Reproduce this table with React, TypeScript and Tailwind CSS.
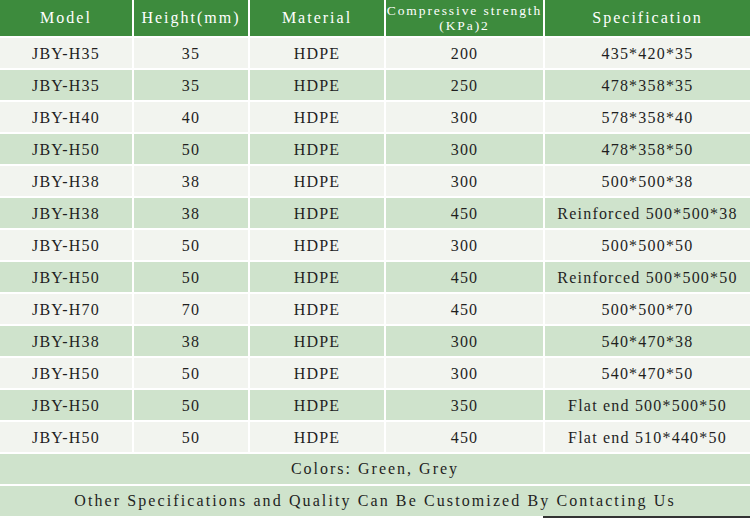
const HEADERS = ["Model", "Height(mm)", "Material", "Compressive strength (KPa)2", "Specification"];

const ROWS: [string, string, string, string, string][] = [
  ["JBY-H35", "35", "HDPE", "200", "435*420*35"],
  ["JBY-H35", "35", "HDPE", "250", "478*358*35"],
  ["JBY-H40", "40", "HDPE", "300", "578*358*40"],
  ["JBY-H50", "50", "HDPE", "300", "478*358*50"],
  ["JBY-H38", "38", "HDPE", "300", "500*500*38"],
  ["JBY-H38", "38", "HDPE", "450", "Reinforced 500*500*38"],
  ["JBY-H50", "50", "HDPE", "300", "500*500*50"],
  ["JBY-H50", "50", "HDPE", "450", "Reinforced 500*500*50"],
  ["JBY-H70", "70", "HDPE", "450", "500*500*70"],
  ["JBY-H38", "38", "HDPE", "300", "540*470*38"],
  ["JBY-H50", "50", "HDPE", "300", "540*470*50"],
  ["JBY-H50", "50", "HDPE", "350", "Flat end 500*500*50"],
  ["JBY-H50", "50", "HDPE", "450", "Flat end 510*440*50"],
];

const COLS = "grid grid-cols-[132px_114px_134px_157px_205px] gap-x-[2px]";

export default function App() {
  return (
    <div className="w-[750px] h-[520px] bg-white flex flex-col gap-y-[2px] font-['Liberation_Serif',serif] text-[#1f1f1f]">
      {/* Header */}
      <div className={`${COLS} h-[36px]`}>
        {HEADERS.map((h, i) => (
          <div
            key={h}
            className={`bg-[#3d8b3d] text-white flex items-center justify-center text-center whitespace-nowrap ${
              i === 3 ? "text-[13.5px] leading-[15px] tracking-[1.9px]" : "text-[16px] tracking-[2px]"
            }`}
          >
            {i === 3 ? (
              <span>
                Compressive strength
                <br />
                (KPa)2
              </span>
            ) : (
              h
            )}
          </div>
        ))}
      </div>

      {/* Data rows */}
      {ROWS.map((row, r) => (
        <div key={r} className={`${COLS} h-[30px]`}>
          {row.map((cell, c) => (
            <div
              key={c}
              className={`flex items-center justify-center pt-[2px] whitespace-nowrap text-[16px] tracking-[1.2px] ${
                r % 2 === 0 ? "bg-[#f2f4ef]" : "bg-[#cfe3cc]"
              }`}
            >
              {cell}
            </div>
          ))}
        </div>
      ))}

      {/* Footer rows */}
      <div className="h-[30px] bg-[#cfe3cc] flex items-center justify-center text-[16px] tracking-[2px]">
        Colors: Green, Grey
      </div>
      <div className="h-[30px] bg-[#cfe3cc] flex items-center justify-center text-[16px] tracking-[2.1px] whitespace-nowrap">
        Other Specifications and Quality Can Be Customized By Contacting Us
      </div>
      <div className="h-[2px] ml-[543px] bg-[#333] -mt-[2px]" />
    </div>
  );
}
